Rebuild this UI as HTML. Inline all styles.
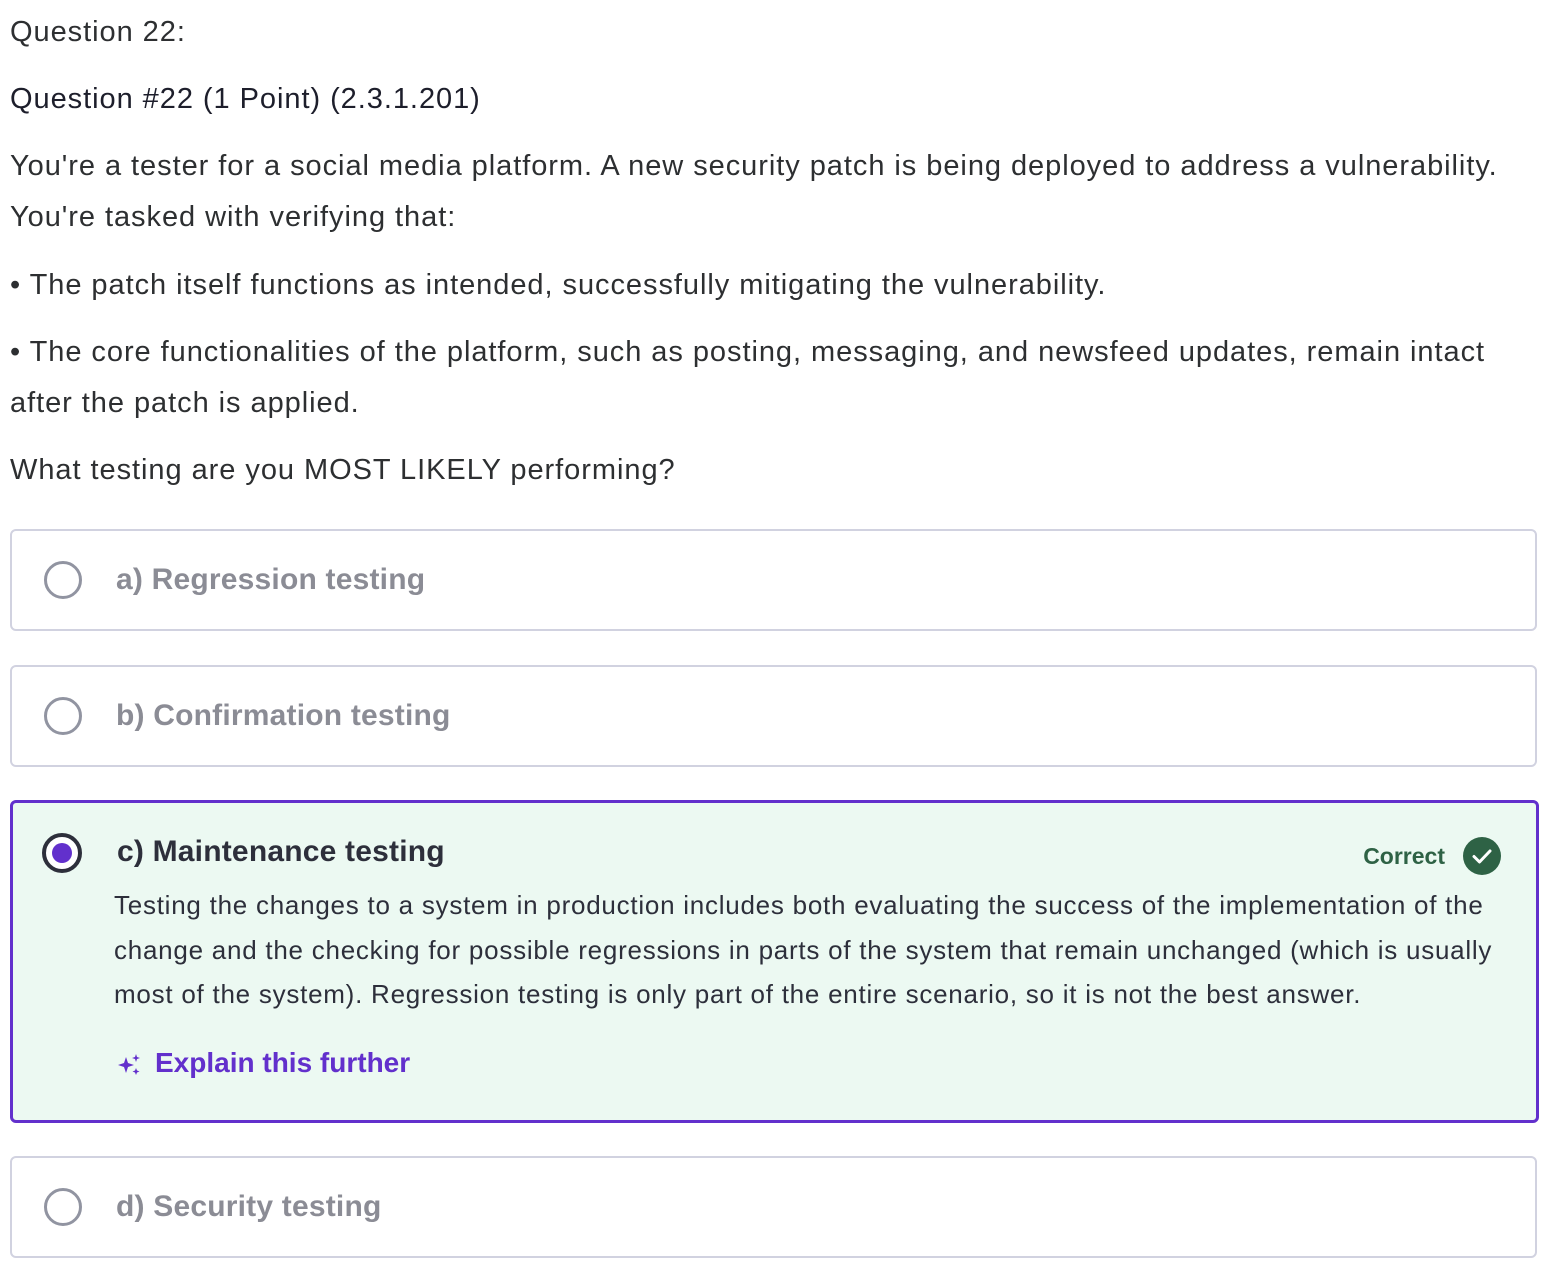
<!DOCTYPE html>
<html><head><style>
body{margin:0;background:#fff;font-family:"Liberation Sans",sans-serif;color:#2d2f31;width:1548px;height:1264px;overflow:hidden;position:relative}
.t{position:absolute;left:10px;font-size:29px;white-space:nowrap;letter-spacing:0.95px}
.box{position:absolute;left:10px;width:1523px;border:2px solid #d1d2e0;border-radius:6px;background:#fff}
.rad{position:absolute;left:32px;width:38px;height:38px;border:3px solid #9194a1;border-radius:50%;box-sizing:border-box}
.opt{position:absolute;left:104px;font-size:30px;font-weight:bold;color:#8b8c95;white-space:nowrap;letter-spacing:0.2px}
</style></head><body>
<div class="t" style="top:16px">Question 22:</div>
<div class="t" style="top:83px;color:#1d1e2b">Question #22 (1 Point) (2.3.1.201)</div>
<div class="t" style="top:150px">You're a tester for a social media platform. A new security patch is being deployed to address a vulnerability.</div>
<div class="t" style="top:201px">You're tasked with verifying that:</div>
<div class="t" style="top:269px">• The patch itself functions as intended, successfully mitigating the vulnerability.</div>
<div class="t" style="top:336px">• The core functionalities of the platform, such as posting, messaging, and newsfeed updates, remain intact</div>
<div class="t" style="top:387px">after the patch is applied.</div>
<div class="t" style="top:454px">What testing are you MOST LIKELY performing?</div>

<div class="box" style="top:529px;height:98px"><div class="rad" style="top:30px"></div><div class="opt" style="top:32px">a) Regression testing</div></div>
<div class="box" style="top:665px;height:98px"><div class="rad" style="top:30px"></div><div class="opt" style="top:32px">b) Confirmation testing</div></div>
<div class="box" style="top:800px;height:317px;border:3px solid #6230cc;background:#ecf9f2">
 <div style="position:absolute;left:29px;top:30px;width:40px;height:40px;border:4px solid #2d2f3b;border-radius:50%;box-sizing:border-box;background:#fff"><div style="position:absolute;left:6px;top:6px;width:20px;height:20px;border-radius:50%;background:#6230cc"></div></div>
 <div class="opt" style="top:32px;color:#2d2f3b">c) Maintenance testing</div>
 <div style="position:absolute;right:91px;top:40px;font-size:23px;font-weight:bold;color:#2e6245">Correct</div>
 <div style="position:absolute;right:35px;top:34px;width:38px;height:38px;border-radius:50%;background:#2e6245"><svg width="38" height="38" viewBox="0 0 38 38"><path d="M11 19.5l5.5 5.5 10.5-11" stroke="#fff" stroke-width="3" fill="none" stroke-linecap="round" stroke-linejoin="round"/></svg></div>
 <div style="position:absolute;left:101px;top:80px;font-size:26px;line-height:44.5px;color:#2d2f3b;width:1395px;letter-spacing:0.75px">Testing the changes to a system in production includes both evaluating the success of the implementation of the change and the checking for possible regressions in parts of the system that remain unchanged (which is usually most of the system). Regression testing is only part of the entire scenario, so it is not the best answer.</div>
 <svg style="position:absolute;left:105px;top:250px" width="24" height="24" viewBox="0 0 24 24"><path d="M8 4l2 6 6 2-6 2-2 6-2-6-6-2 6-2z" fill="#6230cc"/><path d="M18 1l1 3 3 1-3 1-1 3-1-3-3-1 3-1z M18 15l1 2.5 2.5 1-2.5 1-1 2.5-1-2.5-2.5-1 2.5-1z" fill="#6230cc"/></svg>
 <div style="position:absolute;left:142px;top:244px;font-size:28px;font-weight:bold;color:#6230cc">Explain this further</div>
</div>
<div class="box" style="top:1156px;height:98px"><div class="rad" style="top:30px"></div><div class="opt" style="top:32px">d) Security testing</div></div>
</body></html>
